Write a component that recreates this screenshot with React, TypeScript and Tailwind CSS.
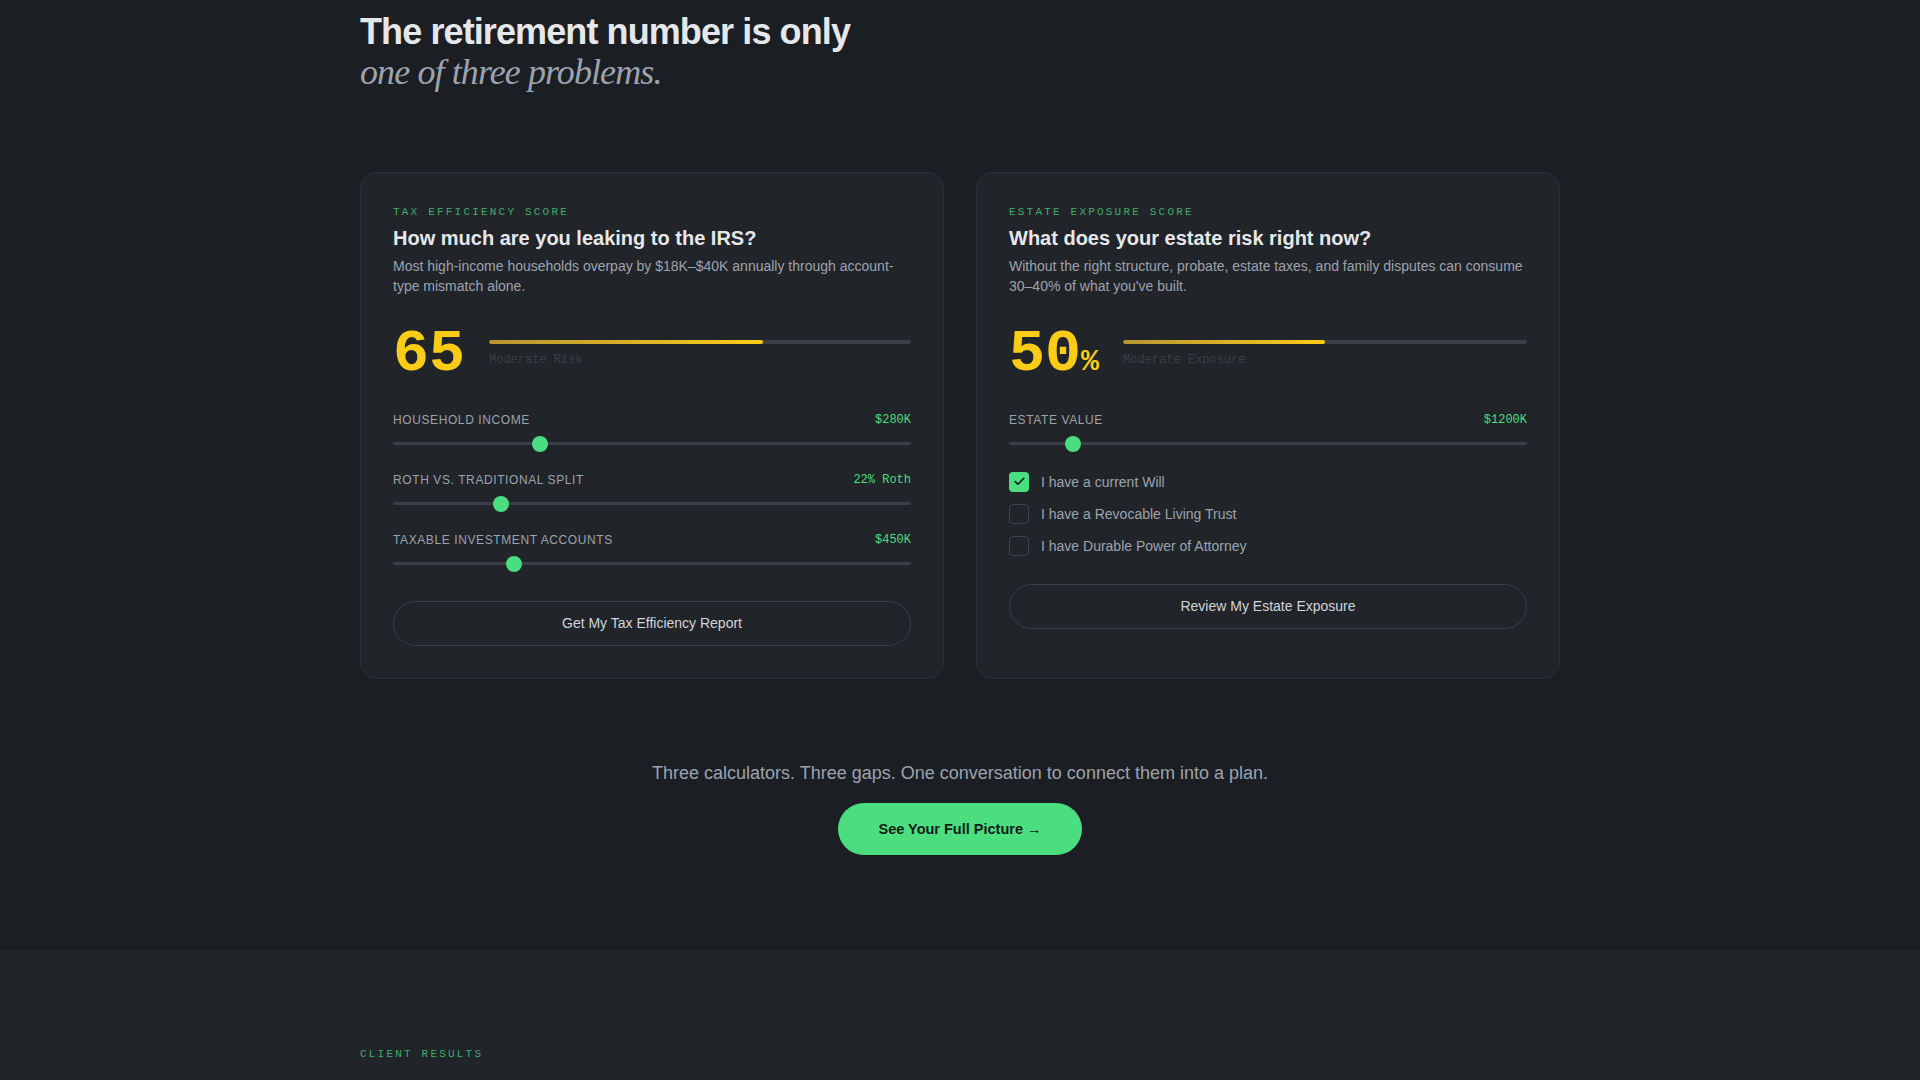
import React from 'react';
import { Check } from 'lucide-react';

const mono = "font-['Liberation_Mono','DejaVu_Sans_Mono',monospace]";

const Slider = ({ label, value, pos }: any) => (
    <div>
        <div className="flex justify-between items-center h-5">
            <span className="text-[12px] uppercase tracking-[0.05em] text-[#9ca3af] leading-5">{label}</span>
            <span className={`${mono} text-[12px] text-[#4ade80] leading-5`}>{value}</span>
        </div>
        <div className="relative h-4 mt-1.5 flex items-center">
            <div className="w-full h-[3px] rounded-full bg-[#3a3e45]" />
            <div className="absolute top-0 w-4 h-4 rounded-full bg-[#4ade80]" style={{ left: `calc(${pos} * (100% - 16px))` }} />
        </div>
    </div>
);

const ScoreBar = ({ pct, note }: any) => (
    <div className="flex-1">
        <div className="h-1 w-full rounded-full bg-[#3a3e45] overflow-hidden">
            <div className="h-full rounded-full bg-gradient-to-r from-[#b8962e] to-[#facc15]" style={{ width: `${pct}%` }} />
        </div>
        <div className={`${mono} mt-2 text-[12px] leading-4 text-[#3a3f47]`}>{note}</div>
    </div>
);

const CheckRow = ({ checked, label }: any) => (
    <div className="flex items-center gap-3 h-5">
        {checked ? (
            <div className="w-5 h-5 rounded-[4px] bg-[#4ade80] flex items-center justify-center">
                <Check size={13} strokeWidth={3} className="text-[#0f1a14]" />
            </div>
        ) : (
            <div className="w-5 h-5 rounded-[4px] border border-[#3f444b]" />
        )}
        <span className="text-[14px] leading-5 text-[#9ca3af]">{label}</span>
    </div>
);

const Card = ({ tag, title, desc, children }: any) => (
    <div className="rounded-2xl border border-[#2b2f35] bg-[#212429] p-8">
        <div className={`${mono} text-[11px] leading-[14px] tracking-[0.2em] uppercase text-[#4ade80]/75`}>{tag}</div>
        <h3 className="mt-[5px] text-[20px] leading-7 font-bold text-[#e5e7eb]">{title}</h3>
        <p className="mt-1 text-[14px] leading-5 text-[#9ca3af]">{desc}</p>
        {children}
    </div>
);

const OutlineButton = ({ children, className = '' }: any) => (
    <button className={`w-full h-[45px] flex items-center justify-center rounded-full border border-[#3a3e45] text-[14px] leading-5 text-[#d1d5db] ${className}`}>
        {children}
    </button>
);

export default function App() {
    return (
        <div className="min-h-screen bg-[#1b1e23] font-['Liberation_Sans',Arial,sans-serif]">
            <section className="pt-[11px] pb-[95px]">
                <div className="max-w-[1200px] mx-auto">
                    <h2 className="text-[36px] leading-[1.15] tracking-tight">
                        <span className="block font-bold text-[#e5e7eb]">The retirement number is only</span>
                        <span className="block italic font-normal text-[#9ca3af] font-['Liberation_Serif',serif]">one of three problems.</span>
                    </h2>

                    <div className="mt-[78px] grid grid-cols-2 gap-8">
                        <Card
                            tag="Tax Efficiency Score"
                            title="How much are you leaking to the IRS?"
                            desc="Most high-income households overpay by $18K–$40K annually through account-type mismatch alone."
                        >
                            <div className="mt-7 flex items-center gap-6 h-[60px]">
                                <span className={`${mono} text-[60px] leading-none font-bold text-[#facc15]`}>65</span>
                                <ScoreBar pct={65} note="Moderate Risk" />
                            </div>
                            <div className="mt-[26px] flex flex-col gap-[18px]">
                                <Slider label="Household Income" value="$280K" pos={0.277} />
                                <Slider label="Roth vs. Traditional Split" value="22% Roth" pos={0.199} />
                                <Slider label="Taxable Investment Accounts" value="$450K" pos={0.225} />
                            </div>
                            <OutlineButton className="mt-[29px]">Get My Tax Efficiency Report</OutlineButton>
                        </Card>

                        <Card
                            tag="Estate Exposure Score"
                            title="What does your estate risk right now?"
                            desc="Without the right structure, probate, estate taxes, and family disputes can consume 30–40% of what you've built."
                        >
                            <div className="mt-7 flex items-center gap-6 h-[60px]">
                                <span className={`${mono} leading-none font-bold text-[#facc15]`}>
                                    <span className="text-[60px]">50</span>
                                    <span className="text-[30px]">%</span>
                                </span>
                                <ScoreBar pct={50} note="Moderate Exposure" />
                            </div>
                            <div className="mt-[26px]">
                                <Slider label="Estate Value" value="$1200K" pos={0.1116} />
                            </div>
                            <div className="mt-5 flex flex-col gap-3">
                                <CheckRow checked label="I have a current Will" />
                                <CheckRow label="I have a Revocable Living Trust" />
                                <CheckRow label="I have Durable Power of Attorney" />
                            </div>
                            <OutlineButton className="mt-7">Review My Estate Exposure</OutlineButton>
                        </Card>
                    </div>

                    <div className="mt-20 flex flex-col items-center">
                        <p className="text-[18px] leading-7 text-[#9ca3af]">
                            Three calculators. Three gaps. One conversation to connect them into a plan.
                        </p>
                        <button className="mt-4 rounded-full bg-[#4ade80] px-10 py-4 text-[14.5px] leading-5 font-bold text-[#0f1a14]">
                            See Your Full Picture →
                        </button>
                    </div>
                </div>
            </section>

            <section className="bg-[#212429] pt-[97px] pb-40">
                <div className="max-w-[1200px] mx-auto">
                    <div className={`${mono} text-[11px] leading-[14px] tracking-[0.2em] uppercase text-[#4ade80]/75`}>Client Results</div>
                </div>
            </section>
        </div>
    );
}
